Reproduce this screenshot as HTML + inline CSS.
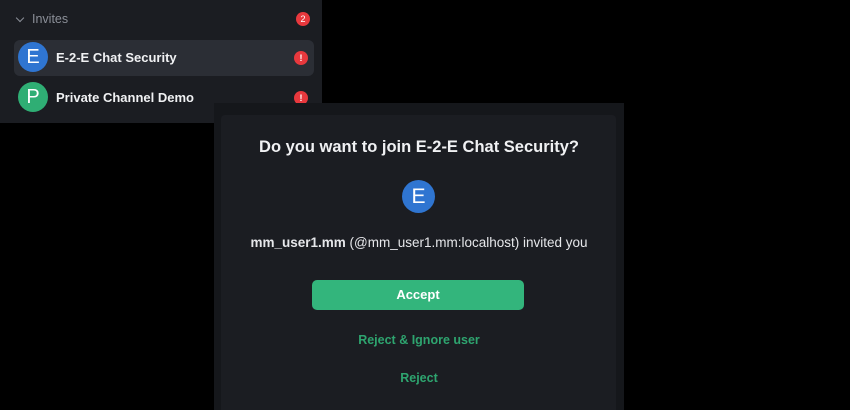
<!DOCTYPE html>
<html><head><meta charset="utf-8"><style>
*{margin:0;padding:0;box-sizing:border-box}
html,body{width:850px;height:410px}
body{background:#000;position:relative;overflow:hidden;font-family:"Liberation Sans",sans-serif;color:#fff}
.side{position:absolute;left:0;top:0;width:322px;height:123px;background:#1b1d22}
.hdr{position:absolute;left:32px;top:12px;font-size:12.5px;color:#8b8f98}
.chev{position:absolute;left:17px;top:15px;width:6px;height:6px;border-right:1.5px solid #8b8f98;border-bottom:1.5px solid #8b8f98;transform:rotate(45deg)}
.badge{position:absolute;width:14px;height:14px;border-radius:7px;background:#e8383d;color:#fff;font-size:9px;text-align:center;line-height:14px}
.sel{position:absolute;left:14px;top:40px;width:300px;height:36px;border-radius:6px;background:#2b2e35}
.av{position:absolute;width:30px;height:30px;border-radius:15px;color:#fff;font-size:20px;text-align:center;line-height:30px}
.name{position:absolute;left:56px;font-size:13px;font-weight:bold;color:#f0f1f3}
.outer{position:absolute;left:214px;top:103px;width:410px;height:307px;background:#15171b}
.card{position:absolute;left:221px;top:115px;width:395px;height:295px;background:#1b1d22;border-radius:4px 4px 0 0}
.c{position:absolute;left:214px;width:410px;text-align:center}
</style></head><body>
<div class="side">
<div class="chev"></div>
<div class="hdr">Invites</div>
<div class="badge" style="left:296px;top:12px">2</div>
<div class="sel"></div>
<div class="av" style="left:18px;top:42px;background:#2f75d1">E</div>
<div class="name" style="top:50px">E-2-E Chat Security</div>
<div class="badge" style="left:294px;top:51px;font-weight:bold">!</div>
<div class="av" style="left:18px;top:82px;background:#2fae74">P</div>
<div class="name" style="top:90px">Private Channel Demo</div>
<div class="badge" style="left:294px;top:91px;font-weight:bold">!</div>
</div>
<div class="outer"></div>
<div class="card"></div>
<div class="c" style="top:138px;font-size:16.5px;font-weight:bold;color:#f0f1f3">Do you want to join E-2-E Chat Security?</div>
<div class="av" style="left:402px;top:180px;width:33px;height:33px;border-radius:17px;line-height:33px;background:#2f75d1;font-size:21px">E</div>
<div class="c" style="top:235px;font-size:13.5px;color:#e6e7ea"><b>mm_user1.mm</b> (@mm_user1.mm:localhost) invited you</div>
<div style="position:absolute;left:312px;top:280px;width:212px;height:30px;border-radius:5px;background:#33b57c;color:#fff;font-size:13px;font-weight:bold;text-align:center;line-height:30px">Accept</div>
<div class="c" style="top:333px;font-size:12.5px;font-weight:bold;color:#2ea46f">Reject &amp; Ignore user</div>
<div class="c" style="top:371px;font-size:12.5px;font-weight:bold;color:#2ea46f">Reject</div>
</body></html>
